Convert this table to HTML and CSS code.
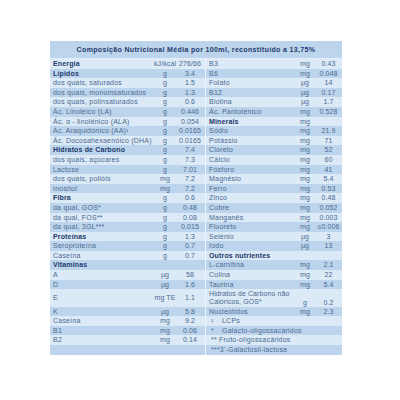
FILE: index.html
```html
<!DOCTYPE html>
<html lang="pt">
<head>
<meta charset="utf-8">
<title>Composição Nutricional</title>
<link rel="stylesheet" href="styles.css">
</head>
<body>
<div class="page">
  <div class="table">
    <div class="title">Composição Nutricional Média por 100ml, reconstituído a 13,75%</div>

    <div class="row odd"><span class="lab b">Energia</span><span class="u">kJ/kcal</span><span class="v">276/66</span><span class="lab r">B3</span><span class="u">mg</span><span class="v">0.43</span></div>
    <div class="row even"><span class="lab b">Lípidos</span><span class="u">g</span><span class="v">3.4</span><span class="lab r">B6</span><span class="u">mg</span><span class="v">0.048</span></div>
    <div class="row odd"><span class="lab">dos quais, saturados</span><span class="u">g</span><span class="v">1.5</span><span class="lab r">Folato</span><span class="u">µg</span><span class="v">14</span></div>
    <div class="row even"><span class="lab">dos quais, monoinsaturados</span><span class="u">g</span><span class="v">1.3</span><span class="lab r">B12</span><span class="u">µg</span><span class="v">0.17</span></div>
    <div class="row odd"><span class="lab">dos quais, polinsaturados</span><span class="u">g</span><span class="v">0.6</span><span class="lab r">Biotina</span><span class="u">µg</span><span class="v">1.7</span></div>
    <div class="row even"><span class="lab">Ác. Linoleico (LA)</span><span class="u">g</span><span class="v">0.446</span><span class="lab r">Ác. Pantoténico</span><span class="u">mg</span><span class="v">0.528</span></div>
    <div class="row odd"><span class="lab">Ác. α - linolénico (ALA)</span><span class="u">g</span><span class="v">0.054</span><span class="lab r b">Minerais</span><span class="u">mg</span><span class="v"></span></div>
    <div class="row even"><span class="lab">Ác. Araquidónico (AA)¹</span><span class="u">g</span><span class="v">0.0165</span><span class="lab r">Sódio</span><span class="u">mg</span><span class="v">21.9</span></div>
    <div class="row odd"><span class="lab">Ác. Docosahexaenóico (DHA)</span><span class="u">g</span><span class="v">0.0165</span><span class="lab r">Potássio</span><span class="u">mg</span><span class="v">71</span></div>
    <div class="row even"><span class="lab b">Hidratos de Carbono</span><span class="u">g</span><span class="v">7.4</span><span class="lab r">Cloreto</span><span class="u">mg</span><span class="v">52</span></div>
    <div class="row odd"><span class="lab">dos quais, açúcares</span><span class="u">g</span><span class="v">7.3</span><span class="lab r">Cálcio</span><span class="u">mg</span><span class="v">60</span></div>
    <div class="row even"><span class="lab">Lactose</span><span class="u">g</span><span class="v">7.01</span><span class="lab r">Fósforo</span><span class="u">mg</span><span class="v">41</span></div>
    <div class="row odd"><span class="lab">dos quais, polióis</span><span class="u">mg</span><span class="v">7.2</span><span class="lab r">Magnésio</span><span class="u">mg</span><span class="v">5.4</span></div>
    <div class="row even"><span class="lab">Inositol</span><span class="u">mg</span><span class="v">7.2</span><span class="lab r">Ferro</span><span class="u">mg</span><span class="v">0.53</span></div>
    <div class="row odd"><span class="lab b">Fibra</span><span class="u">g</span><span class="v">0.6</span><span class="lab r">Zinco</span><span class="u">mg</span><span class="v">0.48</span></div>
    <div class="row even"><span class="lab">da qual, GOS*</span><span class="u">g</span><span class="v">0.48</span><span class="lab r">Cobre</span><span class="u">mg</span><span class="v">0.052</span></div>
    <div class="row odd"><span class="lab">da qual, FOS**</span><span class="u">g</span><span class="v">0.08</span><span class="lab r">Manganês</span><span class="u">mg</span><span class="v">0.003</span></div>
    <div class="row even"><span class="lab">da qual, 3GL***</span><span class="u">g</span><span class="v">0.015</span><span class="lab r">Fluoreto</span><span class="u">mg</span><span class="v">≤0.006</span></div>
    <div class="row odd"><span class="lab b">Proteínas</span><span class="u">g</span><span class="v">1.3</span><span class="lab r">Selénio</span><span class="u">µg</span><span class="v">3</span></div>
    <div class="row even"><span class="lab">Seroproteína</span><span class="u">g</span><span class="v">0.7</span><span class="lab r">Iodo</span><span class="u">µg</span><span class="v">13</span></div>
    <div class="row odd"><span class="lab">Caseína</span><span class="u">g</span><span class="v">0.7</span><span class="lab r b">Outros nutrientes</span><span class="u"></span><span class="v"></span></div>
    <div class="row even"><span class="lab b">Vitaminas</span><span class="u"></span><span class="v"></span><span class="lab r">L-carnitina</span><span class="u">mg</span><span class="v">2.1</span></div>
    <div class="row odd"><span class="lab">A</span><span class="u">µg</span><span class="v">58</span><span class="lab r">Colina</span><span class="u">mg</span><span class="v">22</span></div>
    <div class="row even"><span class="lab">D</span><span class="u">µg</span><span class="v">1.6</span><span class="lab r">Taurina</span><span class="u">mg</span><span class="v">5.4</span></div>
    <div class="row odd tall"><span class="lab">E</span><span class="u">mg TE</span><span class="v">1.1</span><span class="lab r two">Hidratos de Carbono não<br>Calóricos, GOS*</span><span class="u low">g</span><span class="v low">0.2</span></div>
    <div class="row even"><span class="lab">K</span><span class="u">µg</span><span class="v">5.8</span><span class="lab r">Nucleótidos</span><span class="u">mg</span><span class="v">2.3</span></div>
    <div class="row odd"><span class="lab">Caseína</span><span class="u">mg</span><span class="v">9.2</span><span class="note r"><span class="mk">¹</span>LCPs</span></div>
    <div class="row even"><span class="lab">B1</span><span class="u">mg</span><span class="v">0.06</span><span class="note r"><span class="mk">*</span>Galacto-oligossacáridos</span></div>
    <div class="row odd"><span class="lab">B2</span><span class="u">mg</span><span class="v">0.14</span><span class="note r"><span class="mk short">**</span>Fruto-oligossacáridos</span></div>
    <div class="row even"><span class="lab"></span><span class="u"></span><span class="v"></span><span class="note r">***3'-Galactosil-lactose</span></div>
  </div>
</div>
</body>
</html>
```

FILE: styles.css
```css
html, body {
  margin: 0;
  padding: 0;
  background: #ffffff;
}

.page {
  padding: 41px 0 0 50px;
}

.table {
  width: 292px;
  font-family: "Liberation Sans", Arial, sans-serif;
  font-size: 7px;
  letter-spacing: 0.22px;
  color: #4a6a92;
}

.title {
  height: 18px;
  line-height: 18px;
  background: #bdd5ec;
  color: #1d3a6c;
  font-weight: bold;
  text-align: center;
  letter-spacing: 0.35px;
  border-bottom: 1px solid #e6eff9;
  box-sizing: border-box;
}

.row {
  display: grid;
  grid-template-columns: 103px 24px 28px 88px 24px 25px;
  height: 9.6px;
  line-height: 9.6px;
  white-space: nowrap;
}

.row.odd {
  background: #dce9f6;
}

.row.even {
  background: #bdd5ec;
}

.row.tall {
  height: 17.4px;
  line-height: 8.4px;
  align-items: center;
}

.lab {
  padding-left: 3px;
  min-width: 0;
}

.lab.r {
  padding-left: 3px;
  border-left: 1px solid #eef4fb;
}

.b {
  font-weight: bold;
  color: #1d3a6c;
  letter-spacing: 0.15px;
}

.u {
  text-align: center;
  letter-spacing: 0.1px;
}

.v {
  text-align: center;
  padding-right: 2px;
  letter-spacing: 0.1px;
}

.two {
  white-space: nowrap;
  line-height: 8.4px;
  padding-top: 0.5px;
  letter-spacing: 0.1px;
}

.low {
  align-self: end;
  line-height: 9px;
}

.note {
  grid-column: 4 / span 3;
  padding-left: 5px;
  border-left: 1px solid #eef4fb;
}

.mk {
  display: inline-block;
  width: 11px;
}

.mk.short {
  width: 8px;
}
```
